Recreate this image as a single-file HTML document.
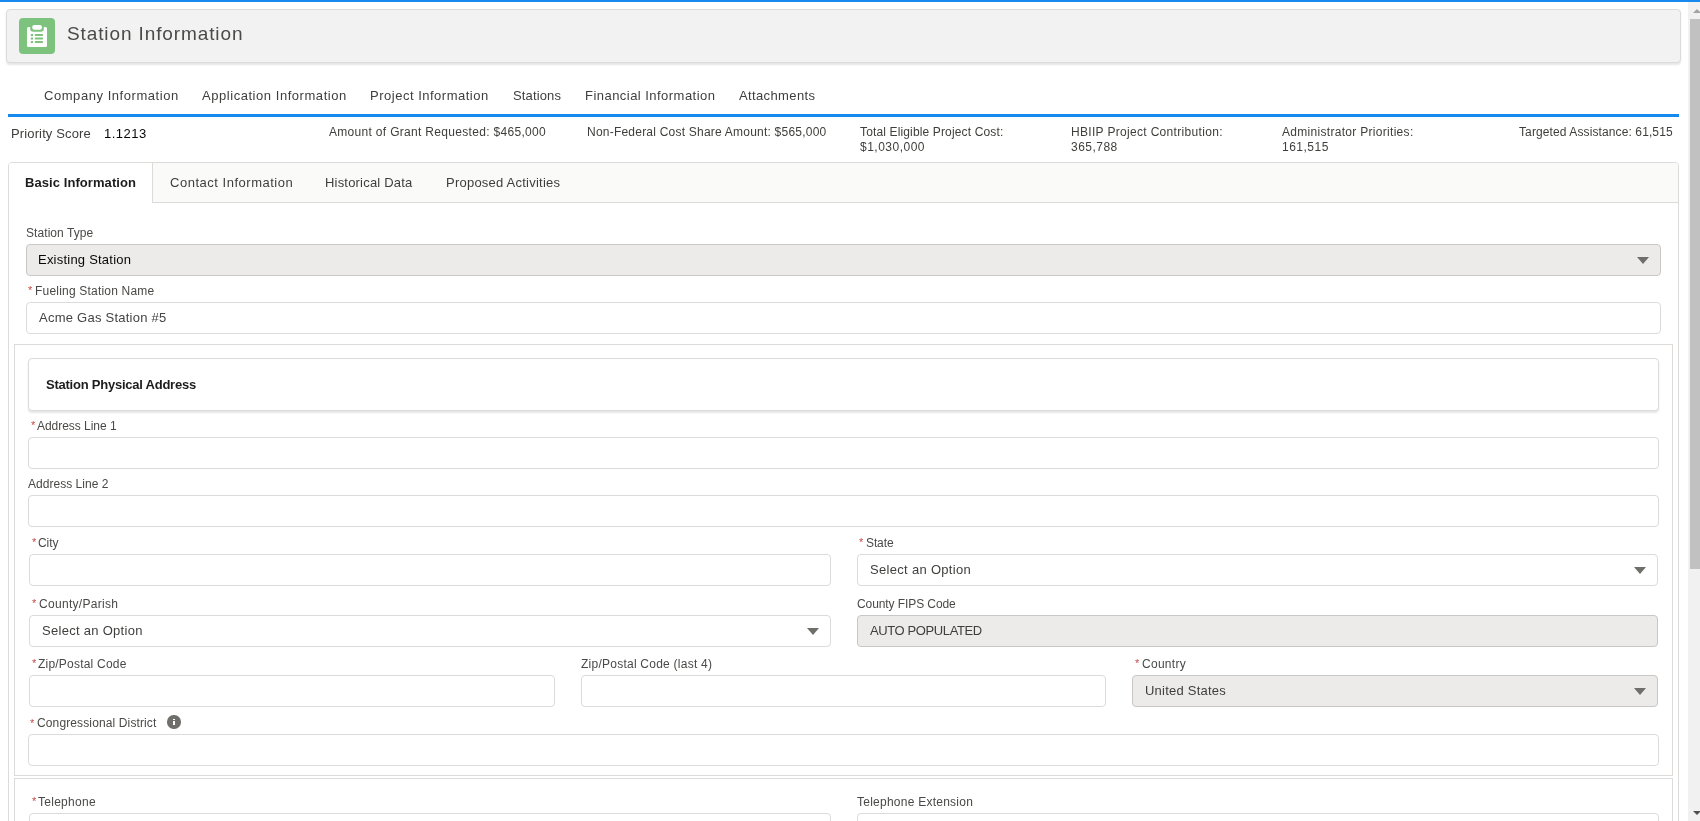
<!DOCTYPE html>
<html><head><meta charset="utf-8">
<style>
html,body{margin:0;padding:0;}
body{width:1700px;height:821px;overflow:hidden;position:relative;background:#fff;font-family:"Liberation Sans",sans-serif;}
.a{position:absolute;box-sizing:border-box;}
.t{position:absolute;white-space:nowrap;will-change:transform;font-family:"Liberation Sans",sans-serif;}
.inp{position:absolute;box-sizing:border-box;height:32px;border:1px solid #dddbda;border-radius:4px;background:#fff;}
.dis{background:#ecebea;border-color:#c9c7c5;}
.caret{position:absolute;width:0;height:0;border-left:6px solid transparent;border-right:6px solid transparent;border-top:7.8px solid #706e6b;}
</style></head><body>
<!-- top blue bar -->
<div class="a" style="left:0;top:0;width:1700px;height:2px;background:#1589ee"></div>
<!-- header card -->
<div class="a" style="left:6px;top:9px;width:1675px;height:54px;background:#f3f2f2;border:1px solid #dddbda;border-radius:4px;box-shadow:0 2px 2px rgba(0,0,0,0.10)"></div>
<div class="a" style="left:19px;top:18px;width:36px;height:36px;background:#7dc37d;border-radius:4px"></div>
<svg class="a" style="left:19px;top:18px" width="36" height="36" viewBox="0 0 36 36">
  <rect x="8" y="9" width="20" height="20" rx="1.5" fill="#fff"/>
  <rect x="11.2" y="3" width="13.6" height="10.8" rx="3" fill="#7dc37d"/>
  <rect x="13.2" y="7.1" width="9.8" height="4.6" rx="2.2" fill="#fff"/>
  <rect x="11.8" y="16" width="2.2" height="2.1" fill="#7dc37d"/>
  <rect x="11.8" y="19.5" width="2.2" height="2.1" fill="#7dc37d"/>
  <rect x="11.8" y="23" width="2.2" height="2.1" fill="#7dc37d"/>
  <rect x="15.6" y="16" width="8.5" height="2.1" rx="1" fill="#7dc37d"/>
  <rect x="15.6" y="19.5" width="8.5" height="2.1" rx="1" fill="#7dc37d"/>
  <rect x="15.6" y="23" width="8.5" height="2.1" rx="1" fill="#7dc37d"/>
</svg>
<!-- nav underline -->
<div class="a" style="left:8px;top:114px;width:1671px;height:3px;background:#1589ee"></div>
<!-- tabset -->
<div class="a" style="left:8px;top:162px;width:1671px;height:700px;border:1px solid #dddbda;border-radius:4px;background:#fff"></div>
<div class="a" style="left:9px;top:163px;width:1669px;height:40px;background:#fafaf9;border-bottom:1px solid #dddbda;border-radius:3px 3px 0 0"></div>
<div class="a" style="left:9px;top:163px;width:144px;height:40px;background:#fff;border-right:1px solid #dddbda;border-radius:3px 0 0 0"></div>
<!-- station type -->
<div class="inp dis" style="left:26px;top:244px;width:1635px"></div>
<div class="caret" style="left:1637px;top:257px"></div>
<div class="inp" style="left:26px;top:302px;width:1635px"></div>
<!-- section box 1 -->
<div class="a" style="left:14px;top:344px;width:1659px;height:432px;border:1px solid #dddbda"></div>
<div class="a" style="left:28px;top:358px;width:1631px;height:53px;border:1px solid #dddbda;border-radius:4px;box-shadow:0 2px 2px rgba(0,0,0,0.10);background:#fff"></div>
<div class="inp" style="left:28px;top:437px;width:1631px"></div>
<div class="inp" style="left:28px;top:495px;width:1631px"></div>
<div class="inp" style="left:29px;top:554px;width:802px"></div>
<div class="inp" style="left:857px;top:554px;width:801px"></div>
<div class="caret" style="left:1634px;top:567px"></div>
<div class="inp" style="left:29px;top:615px;width:802px"></div>
<div class="caret" style="left:807px;top:628px"></div>
<div class="inp dis" style="left:857px;top:615px;width:801px"></div>
<div class="inp" style="left:29px;top:675px;width:526px"></div>
<div class="inp" style="left:581px;top:675px;width:525px"></div>
<div class="inp dis" style="left:1132px;top:675px;width:526px"></div>
<div class="caret" style="left:1634px;top:688px"></div>
<div class="a" style="left:167.3px;top:715.2px;width:13.4px;height:13.4px;border-radius:50%;background:#706e6b"></div>
<div class="a" style="left:172.8px;top:718.8px;width:2.3px;height:1.4px;background:#fff"></div>
<div class="a" style="left:172.8px;top:721.2px;width:2.3px;height:3.9px;background:#fff"></div>
<div class="inp" style="left:28px;top:734px;width:1631px"></div>
<!-- section box 2 -->
<div class="a" style="left:14px;top:778px;width:1659px;height:100px;border:1px solid #dddbda"></div>
<div class="inp" style="left:29px;top:813px;width:802px"></div>
<div class="inp" style="left:857px;top:813px;width:802px"></div>
<!-- scrollbar -->
<div class="a" style="left:1688px;top:2px;width:12px;height:819px;background:#f1f1f1"></div>
<div class="a" style="left:1690px;top:19px;width:10px;height:550px;background:#c1c1c1"></div>
<div class="a" style="left:1692.5px;top:9px;width:0;height:0;border-left:4px solid transparent;border-right:4px solid transparent;border-bottom:4px solid #a3a3a3"></div>
<div class="a" style="left:1692.5px;top:811px;width:0;height:0;border-left:4px solid transparent;border-right:4px solid transparent;border-top:4px solid #505050"></div>
<div class="t" style="left:67.30px;top:24.02px;font-size:19px;line-height:19px;font-weight:400;color:#4a4a48;letter-spacing:0.888px">Station Information</div>
<div class="t" style="left:44.00px;top:89.00px;font-size:13px;line-height:13px;font-weight:400;color:#3e3e3c;letter-spacing:0.553px">Company Information</div>
<div class="t" style="left:202.00px;top:89.00px;font-size:13px;line-height:13px;font-weight:400;color:#3e3e3c;letter-spacing:0.545px">Application Information</div>
<div class="t" style="left:370.00px;top:89.00px;font-size:13px;line-height:13px;font-weight:400;color:#3e3e3c;letter-spacing:0.507px">Project Information</div>
<div class="t" style="left:513.00px;top:89.00px;font-size:13px;line-height:13px;font-weight:400;color:#3e3e3c;letter-spacing:0.147px">Stations</div>
<div class="t" style="left:584.80px;top:89.00px;font-size:13px;line-height:13px;font-weight:400;color:#3e3e3c;letter-spacing:0.463px">Financial Information</div>
<div class="t" style="left:739.30px;top:89.00px;font-size:13px;line-height:13px;font-weight:400;color:#3e3e3c;letter-spacing:0.374px">Attachments</div>
<div class="t" style="left:11.00px;top:127.00px;font-size:13px;line-height:13px;font-weight:400;color:#3e3e3c;letter-spacing:0.132px">Priority Score</div>
<div class="t" style="left:103.75px;top:127.00px;font-size:13px;line-height:13px;font-weight:400;color:#080707;letter-spacing:0.494px">1.1213</div>
<div class="t" style="left:328.75px;top:125.84px;font-size:12px;line-height:12px;font-weight:400;color:#3e3e3c;letter-spacing:0.311px">Amount of Grant Requested: $465,000</div>
<div class="t" style="left:587.00px;top:125.84px;font-size:12px;line-height:12px;font-weight:400;color:#3e3e3c;letter-spacing:0.221px">Non-Federal Cost Share Amount: $565,000</div>
<div class="t" style="left:859.80px;top:125.84px;font-size:12px;line-height:12px;font-weight:400;color:#3e3e3c;letter-spacing:0.142px">Total Eligible Project Cost:</div>
<div class="t" style="left:859.80px;top:140.84px;font-size:12px;line-height:12px;font-weight:400;color:#3e3e3c;letter-spacing:0.491px">$1,030,000</div>
<div class="t" style="left:1071.00px;top:125.84px;font-size:12px;line-height:12px;font-weight:400;color:#3e3e3c;letter-spacing:0.321px">HBIIP Project Contribution:</div>
<div class="t" style="left:1071.00px;top:140.84px;font-size:12px;line-height:12px;font-weight:400;color:#3e3e3c;letter-spacing:0.483px">365,788</div>
<div class="t" style="left:1282.00px;top:125.84px;font-size:12px;line-height:12px;font-weight:400;color:#3e3e3c;letter-spacing:0.300px">Administrator Priorities:</div>
<div class="t" style="left:1282.00px;top:140.84px;font-size:12px;line-height:12px;font-weight:400;color:#3e3e3c;letter-spacing:0.499px">161,515</div>
<div class="t" style="left:1519.20px;top:125.84px;font-size:12px;line-height:12px;font-weight:400;color:#3e3e3c;letter-spacing:0.109px">Targeted Assistance: 61,515</div>
<div class="t" style="left:25.00px;top:176.00px;font-size:13px;line-height:13px;font-weight:700;color:#1c1c1c;letter-spacing:0.072px">Basic Information</div>
<div class="t" style="left:170.00px;top:176.00px;font-size:13px;line-height:13px;font-weight:400;color:#3e3e3c;letter-spacing:0.516px">Contact Information</div>
<div class="t" style="left:325.00px;top:176.00px;font-size:13px;line-height:13px;font-weight:400;color:#3e3e3c;letter-spacing:0.193px">Historical Data</div>
<div class="t" style="left:445.80px;top:176.00px;font-size:13px;line-height:13px;font-weight:400;color:#3e3e3c;letter-spacing:0.231px">Proposed Activities</div>
<div class="t" style="left:26.10px;top:226.84px;font-size:12px;line-height:12px;font-weight:400;color:#4a4947;letter-spacing:0.070px">Station Type</div>
<div class="t" style="left:38.20px;top:253.00px;font-size:13px;line-height:13px;font-weight:400;color:#080707;letter-spacing:0.222px">Existing Station</div>
<div class="t" style="left:35.30px;top:285.14px;font-size:12px;line-height:12px;font-weight:400;color:#4a4947;letter-spacing:0.199px">Fueling Station Name</div>
<div class="t" style="left:39.20px;top:310.80px;font-size:13px;line-height:13px;font-weight:400;color:#444444;letter-spacing:0.244px">Acme Gas Station #5</div>
<div class="t" style="left:45.50px;top:378.00px;font-size:13px;line-height:13px;font-weight:700;color:#1c1c1c;letter-spacing:-0.236px">Station Physical Address</div>
<div class="t" style="left:37.40px;top:419.84px;font-size:12px;line-height:12px;font-weight:400;color:#4a4947;letter-spacing:-0.037px">Address Line 1</div>
<div class="t" style="left:28.20px;top:477.84px;font-size:12px;line-height:12px;font-weight:400;color:#4a4947;letter-spacing:0.025px">Address Line 2</div>
<div class="t" style="left:38.30px;top:536.84px;font-size:12px;line-height:12px;font-weight:400;color:#4a4947;letter-spacing:-0.055px">City</div>
<div class="t" style="left:865.50px;top:536.84px;font-size:12px;line-height:12px;font-weight:400;color:#4a4947;letter-spacing:-0.111px">State</div>
<div class="t" style="left:869.50px;top:563.00px;font-size:13px;line-height:13px;font-weight:400;color:#3e3e3c;letter-spacing:0.308px">Select an Option</div>
<div class="t" style="left:38.50px;top:597.84px;font-size:12px;line-height:12px;font-weight:400;color:#4a4947;letter-spacing:0.300px">County/Parish</div>
<div class="t" style="left:856.80px;top:597.84px;font-size:12px;line-height:12px;font-weight:400;color:#4a4947;letter-spacing:-0.085px">County FIPS Code</div>
<div class="t" style="left:42.00px;top:624.30px;font-size:13px;line-height:13px;font-weight:400;color:#3e3e3c;letter-spacing:0.288px">Select an Option</div>
<div class="t" style="left:870.00px;top:624.00px;font-size:13px;line-height:13px;font-weight:400;color:#3e3e3c;letter-spacing:-0.391px">AUTO POPULATED</div>
<div class="t" style="left:38.30px;top:657.84px;font-size:12px;line-height:12px;font-weight:400;color:#4a4947;letter-spacing:0.214px">Zip/Postal Code</div>
<div class="t" style="left:580.80px;top:657.84px;font-size:12px;line-height:12px;font-weight:400;color:#4a4947;letter-spacing:0.244px">Zip/Postal Code (last 4)</div>
<div class="t" style="left:1141.80px;top:657.84px;font-size:12px;line-height:12px;font-weight:400;color:#4a4947;letter-spacing:0.280px">Country</div>
<div class="t" style="left:1144.60px;top:684.00px;font-size:13px;line-height:13px;font-weight:400;color:#3e3e3c;letter-spacing:0.230px">United States</div>
<div class="t" style="left:37.00px;top:717.24px;font-size:12px;line-height:12px;font-weight:400;color:#4a4947;letter-spacing:0.125px">Congressional District</div>
<div class="t" style="left:38.30px;top:796.04px;font-size:12px;line-height:12px;font-weight:400;color:#4a4947;letter-spacing:0.274px">Telephone</div>
<div class="t" style="left:856.80px;top:796.04px;font-size:12px;line-height:12px;font-weight:400;color:#4a4947;letter-spacing:0.248px">Telephone Extension</div>
<div class="t" style="left:27.90px;top:285.49px;font-size:11px;line-height:11px;color:#c94a45">*</div>
<div class="t" style="left:30.60px;top:420.19px;font-size:11px;line-height:11px;color:#c94a45">*</div>
<div class="t" style="left:31.50px;top:537.19px;font-size:11px;line-height:11px;color:#c94a45">*</div>
<div class="t" style="left:858.70px;top:537.19px;font-size:11px;line-height:11px;color:#c94a45">*</div>
<div class="t" style="left:31.50px;top:598.19px;font-size:11px;line-height:11px;color:#c94a45">*</div>
<div class="t" style="left:31.50px;top:658.19px;font-size:11px;line-height:11px;color:#c94a45">*</div>
<div class="t" style="left:1134.70px;top:658.19px;font-size:11px;line-height:11px;color:#c94a45">*</div>
<div class="t" style="left:30.10px;top:717.59px;font-size:11px;line-height:11px;color:#c94a45">*</div>
<div class="t" style="left:31.50px;top:796.39px;font-size:11px;line-height:11px;color:#c94a45">*</div>
</body></html>
